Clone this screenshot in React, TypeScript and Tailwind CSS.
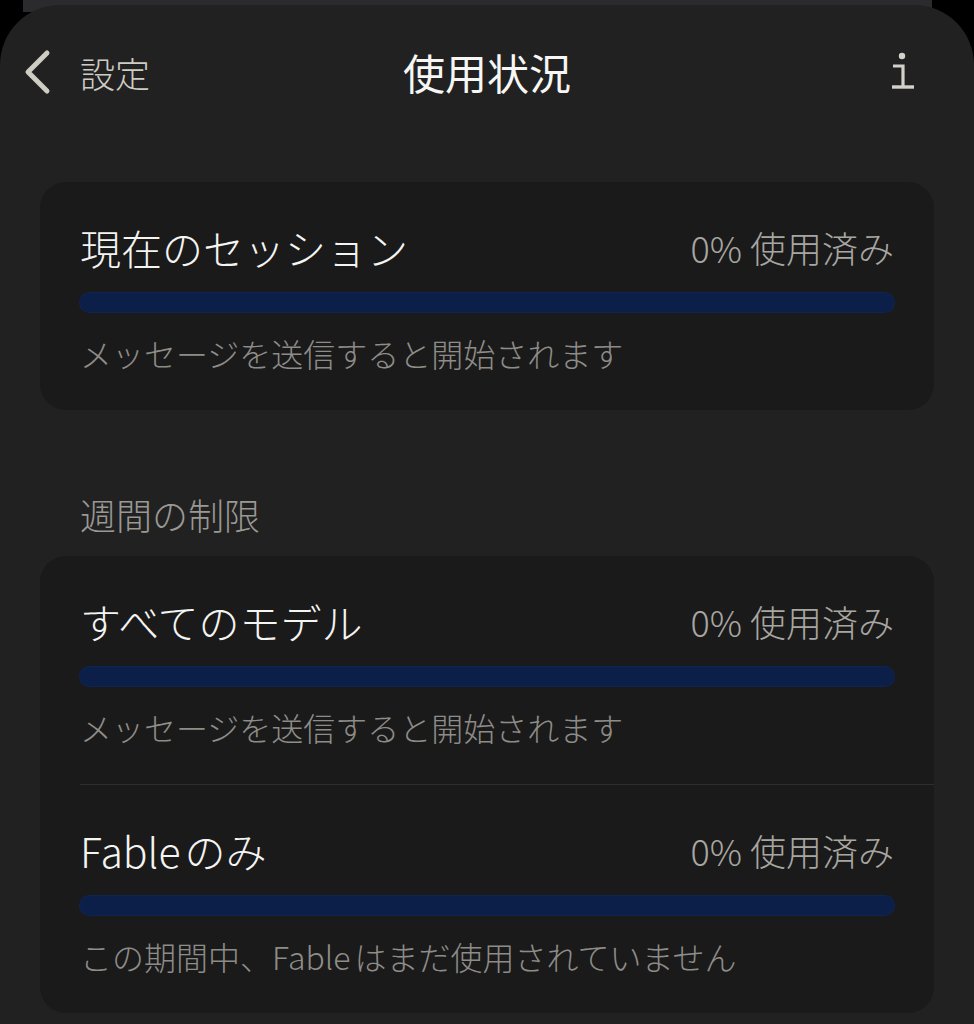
import React from "react";

type UsageRow = {
  title: React.ReactNode;
  percent: number;
  note: React.ReactNode;
};

const font = "font-['Noto_Sans_CJK_JP','Noto_Sans',sans-serif]";

function UsageRowView({ row }: { row: UsageRow }) {
  return (
    <div className="px-10 pb-[37px] pt-[41px]">
      <div className="flex h-12 items-center justify-between">
        <span className="text-[41px] font-light leading-none text-[#f4f4f2]">{row.title}</span>
        <span className="text-[36px] font-light leading-none text-[#a8a6a1]">
          {row.percent}% 使用済み
        </span>
      </div>
      <div className="mt-[22px] h-[19px] w-full overflow-hidden rounded-full bg-[#0b1f48] ring-1 ring-[#0f2550]">
        <div className="h-full rounded-full bg-[#2f6fe0]" style={{ width: `${row.percent}%` }} />
      </div>
      <p className="mt-[21px] flex h-10 items-center text-[32px] font-light leading-none text-[#8e8c88]">
        {row.note}
      </p>
    </div>
  );
}

export default function App() {
  const session: UsageRow = {
    title: "現在のセッション",
    percent: 0,
    note: "メッセージを送信すると開始されます"
  };

  const weekly: UsageRow[] = [
    { title: "すべてのモデル", percent: 0, note: "メッセージを送信すると開始されます" },
    {
      title: (
        <>
          Fable<span className="ml-1">のみ</span>
        </>
      ),
      percent: 0,
      note: (
        <>
          この期間中、Fable<span className="ml-1">はまだ使用されていません</span>
        </>
      )
    }
  ];

  return (
    <div className={`relative min-h-[1024px] overflow-hidden bg-black ${font}`}>
      {/* sheet peeking out behind */}
      <div className="absolute left-[23px] right-[42px] top-0 h-[12px] bg-[#2b2b2d]" />

      <div className="relative mt-[5px] min-h-[1019px] rounded-t-[60px] bg-[#212121] pt-[35px]">
        {/* nav bar */}
        <div className="relative flex h-[64px] items-center px-[22px]">
          <div className="flex items-center gap-[28px] text-[#cfccc4]">
            <svg width="30" height="46" viewBox="0 0 30 46" fill="none">
              <path
                d="M25 4 L6 23 L25 42"
                stroke="#cfccc4"
                strokeWidth="5"
                strokeLinecap="round"
                strokeLinejoin="round"
              />
            </svg>
            <span className="text-[35px] font-light leading-none">設定</span>
          </div>
          <h1 className="absolute left-1/2 -translate-x-1/2 text-[42px] font-normal leading-none text-[#f6f6f4]">
            使用状況
          </h1>
          <svg className="ml-auto mr-[36px]" width="26" height="40" viewBox="0 0 26 40" fill="none">
            <circle cx="12" cy="4" r="3.2" fill="#d4d1ca" />
            <path d="M3 14 H13 V35" stroke="#d4d1ca" strokeWidth="3.2" />
            <path d="M2 35 H24" stroke="#d4d1ca" strokeWidth="3.4" />
          </svg>
        </div>

        <div className="px-10 pt-[78px]">
          <div className="overflow-hidden rounded-[26px] bg-[#1a1a1a]">
            <UsageRowView row={session} />
          </div>

          <h2 className="mt-[82px] flex h-11 items-center px-10 text-[36px] font-light leading-none text-[#9a9894]">
            週間の制限
          </h2>

          <div className="mt-[20px] overflow-hidden rounded-[26px] bg-[#1a1a1a]">
            {weekly.map((row, i) => (
              <div key={i} className={i > 0 ? "ml-10 border-t border-[#2e2e2e]" : ""}>
                <div className={i > 0 ? "-ml-10" : ""}>
                  <UsageRowView row={row} />
                </div>
              </div>
            ))}
          </div>
        </div>
      </div>
    </div>
  );
}
